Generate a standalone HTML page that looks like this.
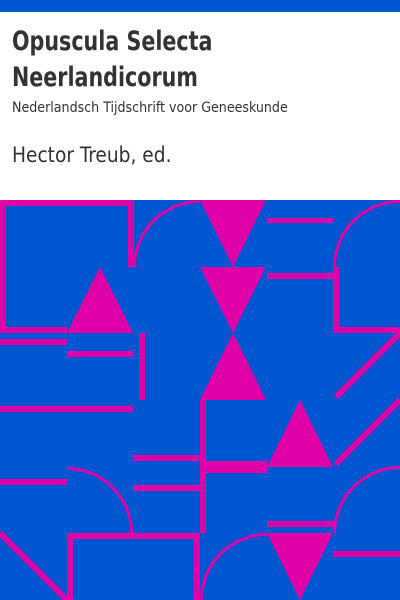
<!DOCTYPE html>
<html><head><style>
html,body{margin:0;padding:0;width:400px;height:600px;overflow:hidden;background:#fff}
.t{position:absolute;left:12px;font-family:"DejaVu Sans Condensed","DejaVu Sans",sans-serif;font-stretch:condensed;color:#333;white-space:nowrap;line-height:1;transform-origin:0 0}
</style></head><body>
<div style="position:absolute;left:0;top:0;width:400px;height:12px;background:#0055d0"></div>
<div class="t" style="top:28px;font-size:27px;font-weight:bold;transform:scaleX(0.85)">Opuscula Selecta</div>
<div class="t" style="top:64px;font-size:27px;font-weight:bold;transform:scaleX(0.85)">Neerlandicorum</div>
<div class="t" style="top:101px;font-size:14.5px;transform:scaleX(0.97)">Nederlandsch Tijdschrift voor Geneeskunde</div>
<div class="t" style="top:145px;font-size:21px;transform:scaleX(0.985)">Hector Treub, ed.</div>
<svg style="position:absolute;left:0;top:200px" width="400" height="400" viewBox="0 200 400 400">
<rect x="0" y="200" width="400" height="400" fill="#0055d0"/>
<g fill="#e000a8">
<rect x="0" y="200" width="133" height="6"/>
<rect x="0" y="200" width="6" height="133"/>
<rect x="128" y="200" width="6" height="67"/>
<rect x="0" y="327" width="67" height="6"/>
<polygon points="200,200 266,200 233,267"/>
<rect x="267" y="218" width="66" height="5"/>
<polygon points="67,333 133,333 100,267"/>
<polygon points="200,267 266,267 233,333"/>
<rect x="267" y="273" width="66" height="6"/>
<rect x="333" y="267" width="6" height="66"/>
<rect x="333" y="327" width="67" height="6"/>
<rect x="0" y="339" width="67" height="6"/>
<rect x="67" y="351" width="66" height="6"/>
<rect x="139" y="333" width="6" height="67"/>
<polygon points="200,400 266,400 233,333"/>
<rect x="0" y="406" width="133" height="6"/>
<rect x="200" y="400" width="6" height="133"/>
<polygon points="267,467 333,467 300,400"/>
<rect x="133" y="455" width="67" height="6"/>
<rect x="200" y="461" width="67" height="12"/>
<rect x="0" y="479" width="67" height="6"/>
<rect x="133" y="485" width="67" height="6"/>
<rect x="267" y="521" width="66" height="6"/>
<polygon points="267,533 333,533 300,600"/>
<rect x="333" y="551" width="67" height="6"/>
<rect x="67" y="533" width="6" height="67"/>
<rect x="67" y="533" width="133" height="6"/>
<rect x="194" y="533" width="6" height="67"/>
</g>
<g fill="none" stroke="#e000a8" stroke-width="3">
<path d="M134.5,267 A65.5,65.5 0 0 1 200,201.5"/>
<path d="M334.5,267 A65.5,65.5 0 0 1 400,201.5"/>
<path d="M67,468.5 A64.5,64.5 0 0 1 131.5,533"/>
<path d="M334.5,533 A65.5,65.5 0 0 1 400,467.5"/>
<path d="M201.5,600 A65.5,65.5 0 0 1 267,534.5"/>
</g>
<g stroke="#e000a8" stroke-width="6" stroke-linecap="butt">
<line x1="400" y1="333" x2="336" y2="397"/>
<line x1="400" y1="400" x2="336" y2="464"/>
<line x1="0" y1="533" x2="67" y2="600"/>
</g>
</svg>
</body></html>
